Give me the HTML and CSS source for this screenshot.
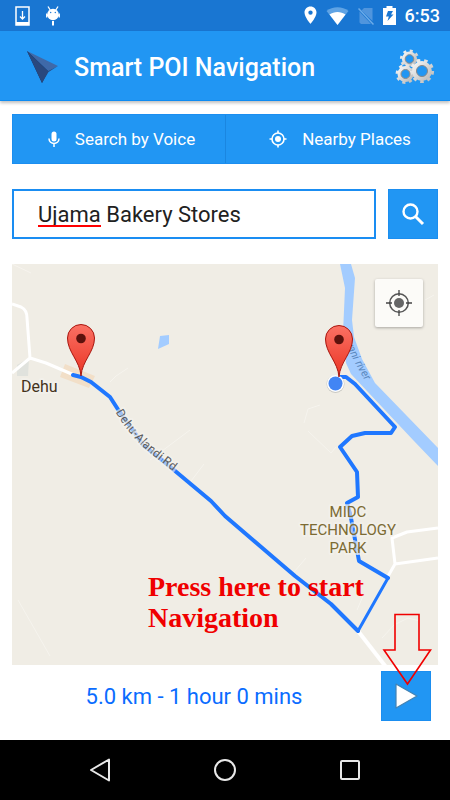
FILE: index.html
```html
<!DOCTYPE html>
<html lang="en">
<head>
    <meta charset="UTF-8">
    <meta name="viewport" content="width=device-width, initial-scale=1.0">
    <title>Smart POI Navigation</title>
    <link rel="stylesheet" href="styles.css">
</head>
<body>
    <div class="status-bar">
        <div class="status-group status-left">
            <svg width="16" height="20" viewBox="0 0 16 20">
                <path d="M1 1h13v18H1z" fill="none" stroke="#fff" stroke-width="1.5"/>
                <path d="M1 16h13v3H1z" fill="#fff"/>
                <path d="M7.500 5v8M5 10.500l2.500 2.500 2.500-2.500" fill="none" stroke="#fff" stroke-width="1.300"/>
            </svg>
            <svg width="14" height="20" viewBox="0 0 14 20">
                <path d="M2 0.500l2.500 4M12 0.500l-2.500 4M0.700 7.500v4M13.300 7.500v4M0.700 9.500h12" fill="none" stroke="#fff" stroke-width="1.300"/>
                <circle cx="7" cy="8.500" r="5.800" fill="#fff"/>
                <circle cx="4.700" cy="6.500" r="0.700" fill="#1976d2"/>
                <circle cx="9.300" cy="6.500" r="0.700" fill="#1976d2"/>
                <path d="M6 15h2v4.500H6z" fill="#fff"/>
            </svg>
        </div>
        <div class="status-group status-right">
            <svg width="13" height="19" viewBox="0 0 13 19">
                <path d="M6.500 0.500C3 .5.500 3.200.500 6.600c0 4.500 6 11.400 6 11.400s6-6.900 6-11.400C12.500 3.200 10 .5 6.500.5zm0 8.300a2.200 2.200 0 1 1 0-4.400 2.200 2.200 0 0 1 0 4.400z" fill="#fff"/>
            </svg>
            <svg width="23" height="18" viewBox="0 0 23 18">
                <path d="M11.500 18L0.500 4C6.500-1 16.500-1 22.500 4z" fill="#5fa3e4"/>
                <path d="M11.500 18L3.500 7.600C8 4 15 4 19.500 7.600z" fill="#fff"/>
            </svg>
            <svg width="16" height="18" viewBox="0 0 16 18">
                <path d="M6 1h8.500v13L3.500 3.500zM1.500 4.500L13 17H3l-1.500-1.500z" fill="#5095dd"/>
                <path d="M0.500 1.500l15 16" stroke="#6cabe8" stroke-width="1.500"/>
            </svg>
            <svg width="13" height="19" viewBox="0 0 13 19">
                <path d="M0 2h3.500V0h6v2H13v17H0z" fill="#fff"/>
                <path d="M5 5h5L8 8.500h2.500L4.500 15l1.300-4.500H3z" fill="#1976d2"/>
            </svg>
            <span class="clock">6:53</span>
        </div>
    </div>

    <header class="toolbar">
        <svg class="logo" width="32" height="33" viewBox="0 0 32 33">
            <path d="M0 0l31 15-10 5z" fill="#3f69a8"/>
            <path d="M0 0l21 20-6 12z" fill="#0c2558"/>
            <path d="M0 0l21 20 10-5-9.500 6L15 32z" fill="#29487e"/>
        </svg>
        <h1>Smart POI Navigation</h1>
        <button class="settings" aria-label="Settings">
            <svg width="40" height="36" viewBox="0 0 40 36">
                <defs>
                    <linearGradient id="metal" x1="0" y1="0" x2="1" y2="1">
                        <stop offset="0" stop-color="#f4f4f4"/>
                        <stop offset="1" stop-color="#bcbcbc"/>
                    </linearGradient>
                </defs>
                <g fill="none" stroke="url(#metal)">
                    <circle cx="14.500" cy="10" r="8.300" stroke-width="2.600" stroke-dasharray="3 3.520"/>
                    <circle cx="14.500" cy="10" r="5.900" stroke-width="3.400"/>
                    <circle cx="10.500" cy="25" r="8.600" stroke-width="2.600" stroke-dasharray="3.100 3.654"/>
                    <circle cx="10.500" cy="25" r="6.200" stroke-width="3.600"/>
                    <circle cx="27" cy="22" r="10.500" stroke-width="3.200" stroke-dasharray="3.500 3.830"/>
                    <circle cx="27" cy="22" r="7.700" stroke-width="4.400"/>
                </g>
                <g fill="none" stroke="#85888a" stroke-width="1">
                    <circle cx="14.500" cy="10" r="4.300"/>
                    <circle cx="10.500" cy="25" r="4.500"/>
                    <circle cx="27" cy="22" r="5.500"/>
                </g>
            </svg>
        </button>
    </header>

    <main>
        <div class="tabs">
            <button class="tab">
                <svg width="12" height="17" viewBox="0 0 12 17">
                    <rect x="3.500" y="0.500" width="5" height="10" rx="2.500" fill="#fff"/>
                    <path d="M1 7.500c0 6.500 10 6.500 10 0M6 12.500V16" fill="none" stroke="#fff" stroke-width="1.500"/>
                </svg>
                <span>Search by Voice</span>
            </button>
            <button class="tab">
                <svg width="18" height="18" viewBox="0 0 18 18">
                    <circle cx="9" cy="9" r="6" fill="none" stroke="#fff" stroke-width="1.600"/>
                    <circle cx="9" cy="9" r="3" fill="#fff"/>
                    <path d="M9 0.500V3M9 15v2.500M0.500 9H3M15 9h2.500" stroke="#fff" stroke-width="1.600"/>
                </svg>
                <span>Nearby Places</span>
            </button>
        </div>

        <form class="search">
            <div class="search-box">
                <input type="text" aria-label="Search place" value="Ujama Bakery Stores" spellcheck="false">
                <span class="spell-mark"></span>
            </div>
            <button type="button" class="square-btn" aria-label="Search">
                <svg width="24" height="24" viewBox="0 0 24 24">
                    <circle cx="9.500" cy="9.500" r="7" fill="none" stroke="#fff" stroke-width="2.400"/>
                    <path d="M14.500 14.500l7.500 7.500" stroke="#fff" stroke-width="3"/>
                </svg>
            </button>
        </form>

        <div class="map">
            <svg class="map-canvas" viewBox="12 264 426 401" preserveAspectRatio="xMidYMid slice">
                <defs>
                    <linearGradient id="pinFill" x1="0" y1="0" x2="0" y2="1">
                        <stop offset="0" stop-color="#fb7164"/>
                        <stop offset="1" stop-color="#ea3424"/>
                    </linearGradient>
                    <g id="pin">
                        <path d="M0 0C-1-15-13.500-24-13.500-38a13.500 13.500 0 0 1 27 0C13.500-24 1-15 0 0z" fill="url(#pinFill)" stroke="#a8160f" stroke-width="1"/>
                        <circle cx="0" cy="-37.500" r="4.800" fill="#5c120d"/>
                    </g>
                    <path id="dehuRoad" d="M119 410C133 434 148 448 184 474"/>
                    <path id="riverLine" d="M346 343C351 357 359 371 373 394"/>
                </defs>

                <!-- land and water -->
                <path d="M17 365l12-7-1 18H17z" fill="#e0e2dd"/>
                <path d="M65 364l30 12-6 12-29-11z" fill="#f2dfc8"/>
                <path d="M160 336l9-1v9l-11 5z" fill="#a3ccff"/>
                <path d="M340 264h11l4 14-3 42 2 17 8 22 13 24 63 65v18l-24-25-63-67-5-11-3-30 2-45z" fill="#a3ccff"/>

                <!-- roads -->
                <g class="lane">
                    <path d="M12 264l19 9M110 382l6-6 12-8M150 460l40-30M188 485l16-21"/>
                    <path d="M18 600l32 56M304 423l4-14 12-4M308 431l23 22 5-6M294 572l12-14M382 638l12-13 14-7 12 3M357 610l6-14M425 300l9-5"/>
                </g>
                <g class="road">
                    <path d="M12 304l9 3q6 3 6 11l3 40-18 15M30 358l16 5 28 12"/>
                    <path d="M438 528l-31 4-15 6 3 26-8 14M395 564l43-6" />
                    <path d="M358 631l28 36" stroke-width="4"/>
                </g>

                <!-- route -->
                <g class="route">
                    <path d="M73 375l8 2 10 5 19 15 9 14 16 22 8 12 19 15 49 41 14 15 70 60 36 28 27 27"/>
                    <path d="M358 631l30-53" stroke-width="3"/>
                    <path d="M388 578l-29-17-8-43-4-15 11-6-1-25-17-25 12-11 13-3h26l4-6-40-43-9-7h-6"/>
                </g>

                <text class="label road-label" dy="4"><textPath href="#dehuRoad">Dehu-Alandi Rd</textPath></text>
                <text class="river-label"><textPath href="#riverLine">yani river</textPath></text>
                <text class="label town" x="21" y="392">Dehu</text>
                <g class="label area">
                    <text x="348" y="517">MIDC</text>
                    <text x="348" y="535">TECHNOLOGY</text>
                    <text x="348" y="553">PARK</text>
                </g>

                <circle cx="335.500" cy="384" r="9" fill="#c9c8c3"/>
                <circle cx="335.500" cy="383.500" r="8.500" fill="#fff"/>
                <circle cx="335.500" cy="383.500" r="7" fill="#4285f4"/>
                <use href="#pin" x="81" y="376"/>
                <use href="#pin" x="339" y="377"/>

                <g class="hint">
                    <text x="148" y="596">Press here to start</text>
                    <text x="148" y="627">Navigation</text>
                </g>
            </svg>
            <button class="locate" aria-label="My location">
                <svg width="28" height="28" viewBox="0 0 28 28">
                    <circle cx="14" cy="14" r="9.300" fill="none" stroke="#555" stroke-width="1.500"/>
                    <circle cx="14" cy="14" r="5" fill="#666"/>
                    <path d="M14 1v6M14 21v6M1 14h6M21 14h6" stroke="#444" stroke-width="1.300"/>
                </svg>
            </button>
        </div>

        <div class="trip">
            <p>5.0 km - 1 hour 0 mins</p>
            <div class="start">
                <button class="square-btn" aria-label="Start navigation">
                    <svg width="26" height="28" viewBox="0 0 26 28">
                        <path d="M3 2l21 12L3 26z" fill="#fff" stroke="#4383b4" stroke-width="1.200" stroke-linejoin="round"/>
                    </svg>
                </button>
                <svg class="arrow" width="50" height="74" viewBox="0 0 50 74">
                    <path d="M13 1.500h24V37h11.500L25.500 71 2 37h11z" fill="none" stroke="#f00000" stroke-width="1.600"/>
                </svg>
            </div>
        </div>
    </main>

    <nav class="nav-bar">
        <button aria-label="Back">
            <svg width="24" height="26" viewBox="0 0 24 26">
                <path d="M21 2.500v21L3 13z" fill="none" stroke="#e8e8e8" stroke-width="2" stroke-linejoin="round"/>
            </svg>
        </button>
        <button aria-label="Home">
            <svg width="24" height="24" viewBox="0 0 24 24">
                <circle cx="12" cy="12" r="10" fill="none" stroke="#e8e8e8" stroke-width="2"/>
            </svg>
        </button>
        <button aria-label="Recent apps">
            <svg width="22" height="22" viewBox="0 0 22 22">
                <rect x="2" y="2" width="18" height="18" rx="1" fill="none" stroke="#e8e8e8" stroke-width="2"/>
            </svg>
        </button>
    </nav>
</body>
</html>
```

FILE: styles.css
```css
* {
    margin: 0;
    padding: 0;
    box-sizing: border-box;
}

body {
    font-family: Roboto, "Noto Sans", sans-serif;
    background: #fff;
    min-height: 100vh;
    display: flex;
    flex-direction: column;
}

button {
    border: none;
    background: none;
    font-family: inherit;
    cursor: pointer;
    display: flex;
    align-items: center;
    justify-content: center;
}

svg {
    display: block;
    flex-shrink: 0;
}

.status-bar {
    height: 31px;
    background: #1976d2;
    color: #fff;
    display: flex;
    align-items: center;
    justify-content: space-between;
    padding: 0 10px 0 15px;
}

.status-group {
    display: flex;
    align-items: center;
}

.status-left {
    gap: 15px;
}

.status-right {
    gap: 9px;
}

.clock {
    font-size: 18px;
    font-weight: 500;
}

.toolbar {
    height: 70px;
    background: #2196f3;
    border-bottom: 1px solid #0d8bf2;
    box-shadow: 0 2px 3px rgba(0, 0, 0, 0.25);
    display: flex;
    align-items: center;
    padding: 3px 15px 0 27px;
}

.toolbar h1 {
    flex: 1;
    margin-left: 15px;
    font-size: 25px;
    font-weight: 500;
    color: #fff;
}

main {
    flex: 1;
    display: flex;
    flex-direction: column;
    padding: 13px 12px 0;
}

.tabs {
    display: flex;
    background: #2196f3;
    border: 1px solid #1b8ef0;
}

.tab {
    width: 50%;
    height: 48px;
    padding-left: 5px;
    gap: 15px;
    font-size: 17px;
    color: #fff;
}

.tab + .tab {
    border-left: 1px solid #1a86e0;
    padding-left: 17px;
}

.search {
    display: flex;
    gap: 12px;
    margin: 25px 0;
}

.search-box {
    flex: 1;
    position: relative;
}

.search-box input {
    width: 100%;
    height: 50px;
    padding: 0 24px;
    border: 2px solid #1a8df2;
    background: #fff;
    font-family: inherit;
    font-size: 22px;
    color: #212121;
    outline: none;
}

.spell-mark {
    position: absolute;
    left: 26px;
    bottom: 12px;
    width: 63px;
    height: 2px;
    background: #f00;
}

.square-btn {
    width: 50px;
    height: 50px;
    background: #2196f3;
    border: 1px solid #1b8ef0;
}

.map {
    flex: 1;
    position: relative;
    display: flex;
    min-height: 400px;
    background: #f0ede5;
}

.map-canvas {
    flex: 1;
    width: 100%;
    height: auto;
}

.road {
    fill: none;
    stroke: #fff;
    stroke-width: 3;
    stroke-linejoin: round;
}

.lane {
    fill: none;
    stroke: #f6f4ee;
    stroke-width: 1;
}

.route {
    fill: none;
    stroke: #1f77ff;
    stroke-width: 4;
    stroke-linejoin: round;
    stroke-linecap: round;
}

.label {
    paint-order: stroke;
    stroke: rgba(245, 243, 238, 0.6);
    stroke-width: 4px;
    stroke-linejoin: round;
}

.road-label {
    font-size: 12px;
    fill: #5b5b5b;
}

.river-label {
    font-size: 11px;
    font-style: italic;
    fill: #5a87bd;
}

.town {
    font-size: 16px;
    fill: #44331c;
}

.area {
    font-size: 15px;
    fill: #7c6b33;
    text-anchor: middle;
}

.hint {
    font-family: "Liberation Serif", serif;
    font-size: 28px;
    font-weight: bold;
    fill: #f00000;
}

.locate {
    position: absolute;
    top: 15px;
    right: 15px;
    width: 48px;
    height: 48px;
    background: #fcfbf8;
    border-radius: 2px;
    box-shadow: 0 1px 3px rgba(0, 0, 0, 0.3);
}

.trip {
    display: flex;
    align-items: center;
    padding: 6px 7px 19px 0;
}

.trip p {
    flex: 1;
    padding-right: 5px;
    font-size: 22px;
    text-align: center;
    color: #0a6cff;
}

.start {
    position: relative;
}

.arrow {
    position: absolute;
    left: 1px;
    bottom: 34px;
    pointer-events: none;
}

.nav-bar {
    height: 60px;
    background: #000;
    display: flex;
    padding: 0 38px;
}

.nav-bar button {
    flex: 1;
}
```
